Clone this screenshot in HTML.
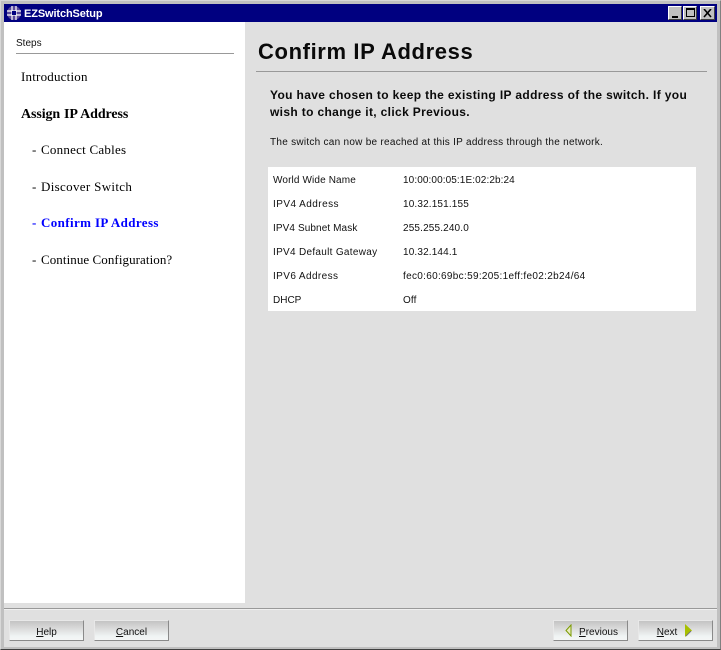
<!DOCTYPE html>
<html>
<head>
<meta charset="utf-8">
<style>
html,body{margin:0;padding:0;width:721px;height:650px;overflow:hidden;background:#c0c0c0}
*{box-sizing:border-box}
.abs,.t{position:absolute;white-space:nowrap}
.t{line-height:14px}
.sans{font-family:"Liberation Sans",sans-serif}
.serif{font-family:"Liberation Serif",serif}
.cell{font-family:"Liberation Sans",sans-serif;font-size:10px;color:#111;letter-spacing:.15px}
.nav{font-family:"Liberation Serif",serif;font-size:13px;color:#000;letter-spacing:.2px}
.wb{position:absolute;top:6px;width:14px;height:14px;background:#c0c0c0;border:1px solid;border-color:#fff #404040 #404040 #fff}
.btn{position:absolute;top:620px;width:75px;height:21px;background:linear-gradient(#c4c4c4,#d8d8d8 35%,#f0f4f4 80%,#f4f6f6);border:1px solid;border-color:#e8e8e8 #8a8a8a #8a8a8a #e8e8e8;font-family:"Liberation Sans",sans-serif;font-size:10px;color:#111;line-height:23px;text-align:center}
.btn u{text-decoration:underline}
</style>
</head>
<body>
<div class="abs" style="left:0;top:0;width:721px;height:650px;background:#c0c0c0;border:1px solid;border-color:#d8d8d8 #808080 #404040 #d8d8d8"></div>
<div class="abs" style="left:4px;top:4px;width:713px;height:18px;background:#000080"></div>
<svg class="abs" style="left:6px;top:5px" width="16" height="16" viewBox="0 0 16 16">
<circle cx="8" cy="8" r="7" fill="#5a4a9a"/>
<path d="M6 1v14M10 1v14M1 6h14M1 10h14" stroke="#fff" stroke-width="1.2" fill="none"/>
<path d="M6 6h4v4H6z" fill="#000080"/>
</svg>
<div class="t sans" style="left:24px;top:7px;font-size:11px;font-weight:bold;color:#fff;letter-spacing:-.12px">EZSwitchSetup</div>
<div class="wb" style="left:668px"><div class="abs" style="left:3px;top:9px;width:6px;height:2px;background:#000"></div></div>
<div class="wb" style="left:683px"><div class="abs" style="left:2px;top:1px;width:9px;height:9px;border:1px solid #000;border-top-width:2px"></div></div>
<div class="wb" style="left:700px;width:15px"><svg class="abs" style="left:2px;top:2px" width="10" height="9" viewBox="0 0 10 9"><path d="M1 0l7 8M8 0L1 8" stroke="#000" stroke-width="1.6" fill="none"/></svg></div>

<div class="abs" style="left:4px;top:22px;width:713px;height:581px;background:#e0e0e0"></div>
<div class="abs" style="left:4px;top:22px;width:241px;height:581px;background:#fff"></div>
<div class="t sans" style="left:16px;top:37px;font-size:10px;color:#111">Steps</div>
<div class="abs" style="left:16px;top:53px;width:218px;height:1px;background:#999"></div>
<div class="t nav" style="left:21px;top:70px">Introduction</div>
<div class="t nav" style="left:21px;top:108px;font-weight:bold;font-size:14px;letter-spacing:-.1px;word-spacing:.5px">Assign IP Address</div>
<div class="t nav" style="left:32px;top:143px">-</div><div class="t nav" style="left:41px;top:143px;letter-spacing:.24px">Connect Cables</div>
<div class="t nav" style="left:32px;top:180px">-</div><div class="t nav" style="left:41px;top:180px;letter-spacing:.33px">Discover Switch</div>
<div class="t nav" style="left:32px;top:216px;color:#0000ff;font-weight:bold">-</div><div class="t nav" style="left:41px;top:216px;color:#0000ff;font-weight:bold;letter-spacing:.38px">Confirm IP Address</div>
<div class="t nav" style="left:32px;top:253px">-</div><div class="t nav" style="left:41px;top:253px;letter-spacing:.07px">Continue Configuration?</div>

<div class="t sans" style="left:258px;top:39px;font-size:22px;line-height:26px;font-weight:bold;color:#0a0a0a;letter-spacing:.62px">Confirm IP Address</div>
<div class="abs" style="left:256px;top:71px;width:451px;height:1px;background:#999"></div>
<div class="t sans" style="left:270px;top:88px;font-size:12px;font-weight:bold;color:#0a0a0a;letter-spacing:.36px">You have chosen to keep the existing IP address of the switch. If you</div>
<div class="t sans" style="left:270px;top:105px;font-size:12px;font-weight:bold;color:#0a0a0a;letter-spacing:.35px">wish to change it, click Previous.</div>
<div class="t cell" style="left:270px;top:136px;letter-spacing:.27px">The switch can now be reached at this IP address through the network.</div>

<div class="abs" style="left:268px;top:167px;width:428px;height:144px;background:#fff"></div>
<div class="t cell" style="left:273px;top:174px;letter-spacing:.13px">World Wide Name</div><div class="t cell" style="left:403px;top:174px;letter-spacing:.1px">10:00:00:05:1E:02:2b:24</div>
<div class="t cell" style="left:273px;top:198px;letter-spacing:.45px">IPV4 Address</div><div class="t cell" style="left:403px;top:198px">10.32.151.155</div>
<div class="t cell" style="left:273px;top:222px;letter-spacing:.1px">IPV4 Subnet Mask</div><div class="t cell" style="left:403px;top:222px">255.255.240.0</div>
<div class="t cell" style="left:273px;top:246px;letter-spacing:.3px">IPV4 Default Gateway</div><div class="t cell" style="left:403px;top:246px">10.32.144.1</div>
<div class="t cell" style="left:273px;top:270px;letter-spacing:.4px">IPV6 Address</div><div class="t cell" style="left:403px;top:270px;letter-spacing:.31px">fec0:60:69bc:59:205:1eff:fe02:2b24/64</div>
<div class="t cell" style="left:273px;top:294px;letter-spacing:0">DHCP</div><div class="t cell" style="left:403px;top:294px">Off</div>

<div class="abs" style="left:4px;top:603px;width:713px;height:44px;background:#e0e0e0"></div>
<div class="abs" style="left:4px;top:608px;width:713px;height:1px;background:#999"></div>
<div class="abs" style="left:4px;top:609px;width:713px;height:1px;background:#f0f0f0"></div>

<div class="btn" style="left:9px"><u>H</u>elp</div>
<div class="btn" style="left:94px"><u>C</u>ancel</div>
<div class="btn" style="left:553px;padding-left:16px"><u>P</u>revious</div>
<svg class="abs" style="left:565px;top:624px" width="7" height="13" viewBox="0 0 7 13"><path d="M6 1L1 6.5 6 12z" fill="#e8ecc0" stroke="#7a9a00" stroke-width="1"/></svg>
<div class="btn" style="left:638px;padding-right:17px"><u>N</u>ext</div>
<svg class="abs" style="left:685px;top:624px" width="7" height="13" viewBox="0 0 7 13"><path d="M0 0L7 6.5 0 13z" fill="#a8c000"/><path d="M1 12L6 7" stroke="#777" stroke-width="1"/></svg>
</body>
</html>
